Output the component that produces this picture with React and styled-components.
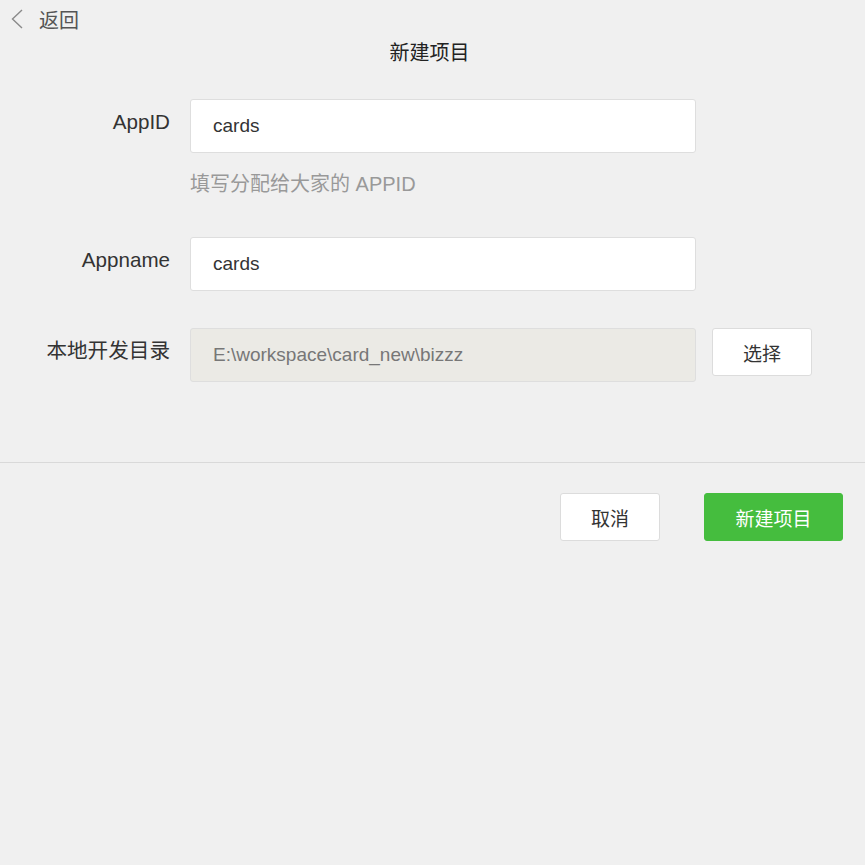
import React from "react";
import styled, { createGlobalStyle } from "styled-components";

const Global = createGlobalStyle`
  html, body { margin: 0; padding: 0; background: #f0f0f0; }
  body { font-family: "Liberation Sans", Arial, "Noto Sans CJK SC", sans-serif; }
  * { box-sizing: border-box; }
`;

const Page = styled.div`
  min-height: 865px;
  background: #f0f0f0;
  display: flex;
  flex-direction: column;
`;

const TopBar = styled.div`
  height: 38px;
  display: flex;
  align-items: center;
  padding-left: 10px;
`;

const BackLink = styled.a`
  display: flex;
  align-items: center;
  gap: 15px;
  color: #555;
  font-size: 20px;
  cursor: pointer;
  text-decoration: none;
  svg { display: block; }
`;

const Title = styled.h1`
  margin: 3px 0 0;
  text-align: center;
  font-size: 20px;
  font-weight: normal;
  line-height: 24px;
  color: #222;
  padding-right: 6px;
`;

const Form = styled.div`
  margin-top: 34px;
  display: flex;
  flex-direction: column;
`;

const Row = styled.div`
  display: grid;
  grid-template-columns: 170px 506px auto;
  column-gap: 20px;
  align-items: start;
  margin-top: ${(p) => p.$gap || 0}px;
`;

const Label = styled.label`
  grid-column: 1;
  justify-self: end;
  font-size: 20.6px;
  color: #333;
  line-height: 24px;
  padding-top: 11px;
  white-space: nowrap;
`;

const Field = styled.div`
  grid-column: 2;
  height: 54px;
  border: 1px solid #dedede;
  border-radius: 3px;
  background: ${(p) => (p.$disabled ? "#ebeae5" : "#fff")};
  color: ${(p) => (p.$disabled ? "#777" : "#333")};
  font-size: 19px;
  display: flex;
  align-items: center;
  padding-left: 22px;
  white-space: nowrap;
`;

const Hint = styled.div`
  grid-column: 2;
  margin-top: 19px;
  font-size: 20px;
  line-height: 24px;
  color: #999;
`;

const Button = styled.button`
  height: 48px;
  width: ${(p) => p.$w}px;
  border-radius: 3px;
  font-family: inherit;
  font-size: 19px;
  cursor: pointer;
  border: 1px solid ${(p) => (p.$primary ? "#45bd3e" : "#dcdcdc")};
  background: ${(p) => (p.$primary ? "#45bd3e" : "#fff")};
  color: ${(p) => (p.$primary ? "#fff" : "#333")};
  padding: 0;
`;

const SideButton = styled(Button)`
  grid-column: 3;
  margin-left: -4px;
`;

const Divider = styled.hr`
  margin: 80px 0 0;
  border: none;
  border-top: 1px solid #d9d9d9;
  height: 0;
`;

const Footer = styled.div`
  display: flex;
  justify-content: flex-end;
  gap: 44px;
  padding: 30px 22px 0 0;
`;

export default function App() {
  return (
    <Page>
      <Global />
      <TopBar>
        <BackLink>
          <svg width="14" height="20" viewBox="0 0 14 20">
            <path d="M12 1 L2.5 10 L12 19" fill="none" stroke="#8a8a8a" strokeWidth="1.4" />
          </svg>
          返回
        </BackLink>
      </TopBar>
      <Title>新建项目</Title>
      <Form>
        <Row>
          <Label>AppID</Label>
          <Field>cards</Field>
          <Hint>填写分配给大家的 APPID</Hint>
        </Row>
        <Row $gap={41}>
          <Label>Appname</Label>
          <Field>cards</Field>
        </Row>
        <Row $gap={37}>
          <Label>本地开发目录</Label>
          <Field $disabled>E:\workspace\card_new\bizzz</Field>
          <SideButton $w={100}>选择</SideButton>
        </Row>
      </Form>
      <Divider />
      <Footer>
        <Button $w={100}>取消</Button>
        <Button $w={139} $primary>新建项目</Button>
      </Footer>
    </Page>
  );
}
